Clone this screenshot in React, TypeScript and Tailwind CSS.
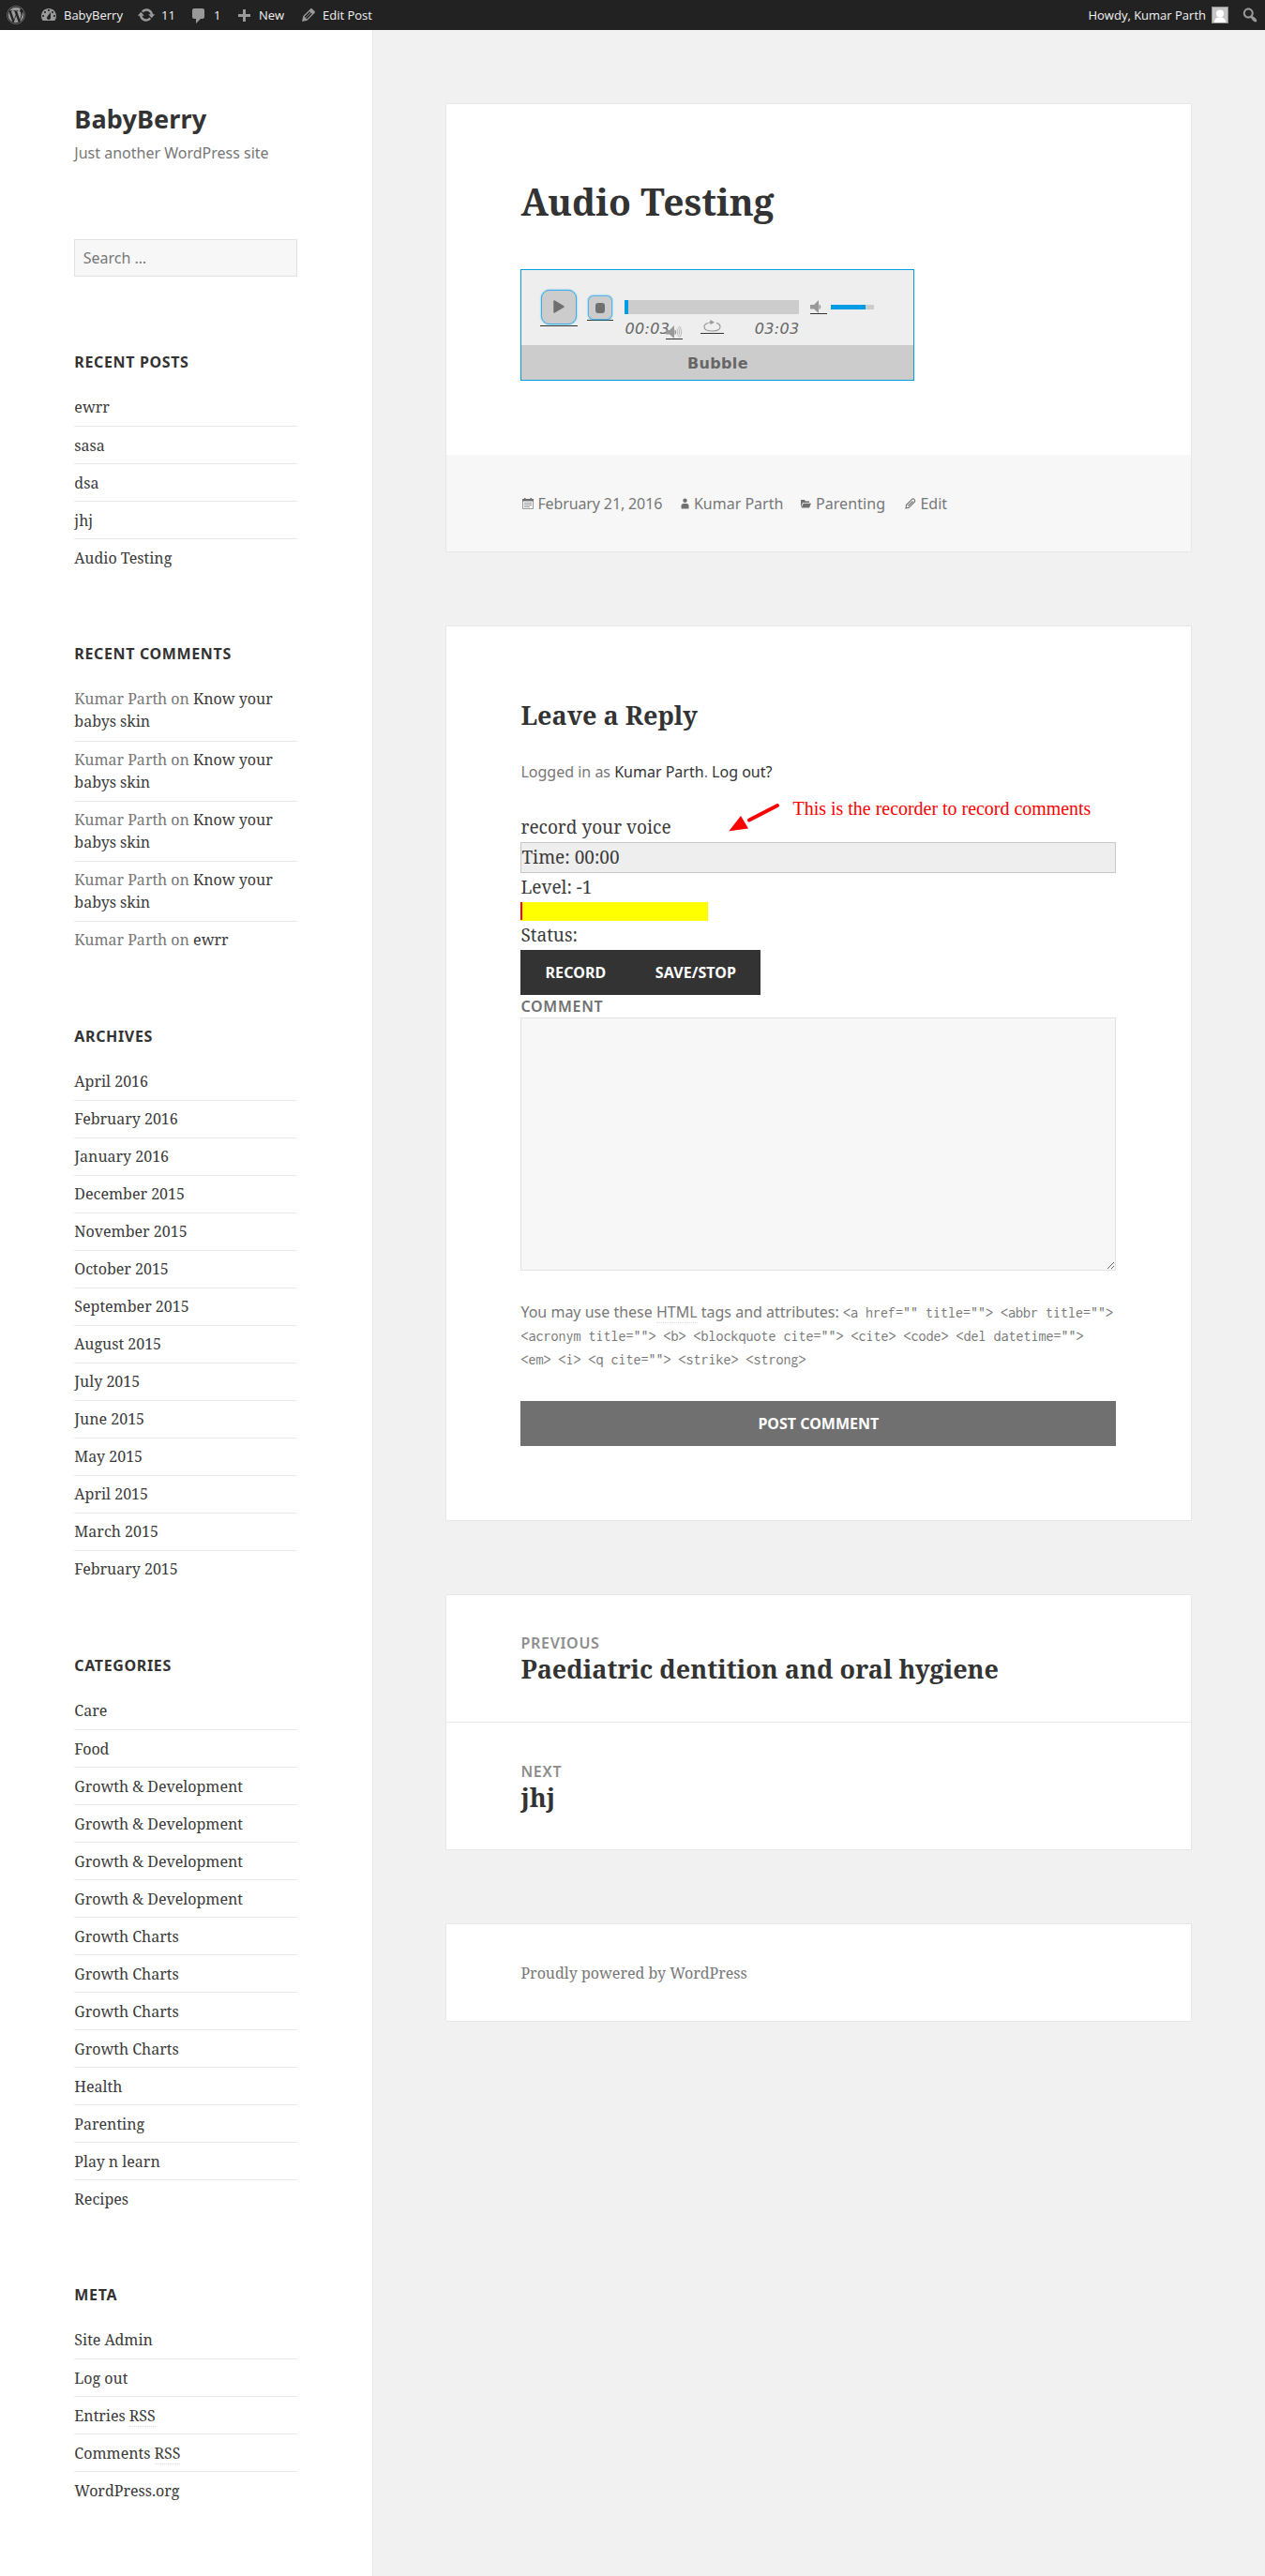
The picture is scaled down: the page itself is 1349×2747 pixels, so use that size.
import type { ReactNode } from "react";
import { FaWordpress } from "react-icons/fa";

const SANS = "font-['Noto_Sans',sans-serif]";
const SERIF = "font-['Noto_Serif','DejaVu_Serif_Condensed','DejaVu_Serif',serif]";
const CARD = "bg-white shadow-[0_0_1px_rgba(0,0,0,0.25)]";

const ICONS = {
  dashboard:
    "M3.76 16h12.48c1.1-1.37 1.76-3.11 1.76-5 0-4.42-3.58-8-8-8s-8 3.58-8 8c0 1.89.66 3.63 1.76 5zM10 4c.55 0 1 .45 1 1s-.45 1-1 1-1-.45-1-1 .45-1 1-1zM6 6c.55 0 1 .45 1 1s-.45 1-1 1-1-.45-1-1 .45-1 1-1zm8 0c.55 0 1 .45 1 1s-.45 1-1 1-1-.45-1-1 .45-1 1-1zm-5.37 5.55L12 7v6c0 1.1-.9 2-2 2s-2-.9-2-2c0-.57.24-1.08.63-1.45zM4 10c.55 0 1 .45 1 1s-.45 1-1 1-1-.45-1-1 .45-1 1-1zm12 0c.55 0 1 .45 1 1s-.45 1-1 1-1-.45-1-1 .45-1 1-1z",
  update:
    "M10.2 3.28c3.53 0 6.43 2.61 6.92 6h2.08l-3.5 4-3.5-4h2.32c-.45-1.97-2.21-3.45-4.32-3.45-1.45 0-2.73.71-3.54 1.78L4.95 5.66C6.23 4.2 8.11 3.28 10.2 3.28zm-.4 13.44c-3.52 0-6.43-2.61-6.92-6H.8l3.5-4c1.17 1.33 2.33 2.67 3.5 4H5.48c.45 1.97 2.21 3.45 4.32 3.45 1.45 0 2.73-.71 3.54-1.78l1.71 1.95c-1.28 1.46-3.15 2.38-5.25 2.38z",
  comment:
    "M5 2h9c1.1 0 2 .9 2 2v7c0 1.1-.9 2-2 2h-2l-5 5v-5H5c-1.1 0-2-.9-2-2V4c0-1.1.9-2 2-2z",
  plus: "M17 7v3h-5v5H9v-5H4V7h5V2h3v5h5z",
  edit: "M13.89 3.39l2.71 2.72c.46.46.42 1.24.03 1.64l-8.01 8.02-5.56 1.16 1.16-5.58s7.6-7.63 7.99-8.03c.39-.39 1.22-.39 1.68.07zm-2.73 2.79l-5.59 5.61 1.11 1.11 5.54-5.65zm-2.97 8.23l5.58-5.6-1.07-1.08-5.59 5.6z",
  search:
    "M12.14 4.18c1.87 1.87 2.11 4.75.72 6.89.12.1.22.21.36.31.2.16.47.36.81.59.34.24.56.39.66.47.42.31.73.57.94.78.32.32.6.65.84 1 .25.35.44.69.59 1.04.14.35.21.68.18 1-.02.32-.14.59-.36.81s-.49.34-.81.36c-.31.02-.65-.04-.99-.19-.35-.14-.7-.34-1.04-.59-.35-.24-.68-.52-1-.84-.21-.21-.47-.52-.77-.93-.1-.13-.25-.35-.47-.66-.22-.32-.4-.57-.56-.78-.16-.2-.29-.35-.44-.5-2.07 1.09-4.69.76-6.44-.98-2.14-2.15-2.14-5.64 0-7.78 2.15-2.15 5.63-2.15 7.78 0zm-1.41 6.36c1.36-1.37 1.36-3.58 0-4.95-1.37-1.37-3.59-1.37-4.95 0-1.37 1.37-1.37 3.58 0 4.95 1.36 1.37 3.58 1.37 4.95 0z",
};

function BarIcon({ name, className = "" }: { name: keyof typeof ICONS; className?: string }) {
  return (
    <svg viewBox="0 0 20 20" className={`h-5 w-5 shrink-0 fill-[#999] ${className}`}>
      <path d={ICONS[name]} />
    </svg>
  );
}

function AdminBar() {
  return (
    <header className="flex h-8 items-center justify-between bg-[#222] font-['Open_Sans',sans-serif] text-[13px] leading-8 text-[#f2f2f2]">
      <nav className="flex items-center">
        <FaWordpress className="ml-[7px] h-5 w-5 text-[#999]" />
        <BarIcon name="dashboard" className="ml-[15px]" />
        <span className="ml-[6px] w-[78px]">BabyBerry</span>
        <BarIcon name="update" />
        <span className="ml-[6px] w-[30px]">11</span>
        <BarIcon name="comment" className="mt-[2px]" />
        <span className="ml-[6px] w-[22px]">1</span>
        <BarIcon name="plus" className="mt-[3px]" />
        <span className="ml-[6px] w-[43px]">New</span>
        <BarIcon name="edit" />
        <span className="ml-[5px]">Edit Post</span>
      </nav>
      <div className="flex items-center">
        <span>Howdy, Kumar Parth</span>
        <svg viewBox="0 0 18 18" className="ml-[6px] h-[18px] w-[18px]">
          <rect x="0.5" y="0.5" width="17" height="17" fill="#c6c6c6" stroke="#8c8f94" />
          <circle cx="9" cy="7.5" r="4" fill="#fff" />
          <path d="M3 17c0-4 2-5 4-5.500h4c2 .5 4 1.500 4 5.500z" fill="#fff" />
        </svg>
        <BarIcon name="search" className="mr-[6px] ml-[13px]" />
      </div>
    </header>
  );
}

function Widget({ title, items }: { title: string; items: ReactNode[] }) {
  return (
    <section className="mb-[78.5px]">
      <h2 className={`${SANS} mb-6 text-base leading-6 font-bold tracking-[0.04em] uppercase`}>{title}</h2>
      <ul className={`${SERIF} text-base leading-6 text-[#3a3a3a]`}>
        {items.map((item, i) => (
          <li
            key={i}
            className="border-b border-[#eaeaea] py-[7.5px] first:pt-0 first:pb-[8.3px] last:border-b-0 last:pb-0"
          >
            {item}
          </li>
        ))}
      </ul>
    </section>
  );
}

function CommentOn({ lines }: { lines: string[] }) {
  return (
    <>
      <span className="text-[#777]">Kumar Parth on </span>
      {lines.map((line, i) => (
        <span key={line}>
          {i > 0 && <br />}
          {line}
        </span>
      ))}
    </>
  );
}

const SKIN_POST = ["Know your", "babys skin"];
const RSS = <abbr className="border-b border-dotted border-[#ddd]">RSS</abbr>;

const WIDGETS: { title: string; items: ReactNode[] }[] = [
  { title: "Recent Posts", items: ["ewrr", "sasa", "dsa", "jhj", "Audio Testing"] },
  {
    title: "Recent Comments",
    items: [
      <CommentOn lines={SKIN_POST} />,
      <CommentOn lines={SKIN_POST} />,
      <CommentOn lines={SKIN_POST} />,
      <CommentOn lines={SKIN_POST} />,
      <CommentOn lines={["ewrr"]} />,
    ],
  },
  {
    title: "Archives",
    items: [
      "April 2016",
      "February 2016",
      "January 2016",
      "December 2015",
      "November 2015",
      "October 2015",
      "September 2015",
      "August 2015",
      "July 2015",
      "June 2015",
      "May 2015",
      "April 2015",
      "March 2015",
      "February 2015",
    ],
  },
  {
    title: "Categories",
    items: [
      "Care",
      "Food",
      "Growth & Development",
      "Growth & Development",
      "Growth & Development",
      "Growth & Development",
      "Growth Charts",
      "Growth Charts",
      "Growth Charts",
      "Growth Charts",
      "Health",
      "Parenting",
      "Play n learn",
      "Recipes",
    ],
  },
  { title: "Meta", items: ["Site Admin", "Log out", <>Entries {RSS}</>, <>Comments {RSS}</>, "WordPress.org"] },
];

function Sidebar() {
  return (
    <aside className="w-[396.75px] shrink-0 bg-white px-[79.35px] pt-[79.35px] shadow-[0_0_1px_rgba(0,0,0,0.25)]">
      <h1 className={`${SANS} text-[27px] leading-8 font-bold tracking-[0.005em]`}>BabyBerry</h1>
      <p className={`${SANS} mt-[8px] mb-[79.7px] text-base leading-6 text-[#777]`}>Just another WordPress site</p>
      <input
        placeholder="Search …"
        className={`${SANS} mb-[79.35px] block h-[39.6px] w-full border border-[#333]/10 bg-[#f7f7f7] px-[8.4px] text-base placeholder:text-[#777]`}
      />
      {WIDGETS.map((w) => (
        <Widget key={w.title} title={w.title} items={w.items} />
      ))}
    </aside>
  );
}

function SpeakerCone() {
  return <path d="M0 5h4l5-5v14L4 9.500H0z M9.500 4.500a3 3 0 0 1 0 5.500z" fill="#999" />;
}

function AudioPlayer() {
  return (
    <div className="mt-[48.300px] h-[119px] w-[420px] border border-[#009de5] bg-[#eee] font-['DejaVu_Sans',sans-serif] text-[#666]">
      <div className="relative flex h-[80px] items-start pl-5">
        <div className="mt-[21px] h-[39px] w-10 border-b border-[#333]">
          <div className="mx-px flex h-[37px] items-center justify-center rounded-[9px] border border-[#3daee9] bg-[#ccc] shadow-[0_0_2px_#3daee9]">
            <svg viewBox="0 0 12 14" className="h-[14px] w-3">
              <path d="M1 1v12l10-6z" fill="#707070" stroke="#707070" strokeWidth="1.500" strokeLinejoin="round" />
            </svg>
          </div>
        </div>
        <div className="mt-[27px] ml-[10px] h-[27px] w-7 border-b border-[#333]">
          <div className="mx-px flex h-[26px] items-center justify-center rounded-[6px] border border-[#3daee9]/80 bg-[#ccc] shadow-[0_0_2px_#3daee9]">
            <div className="mt-px h-[11px] w-[10px] rounded-[3px] bg-[#707070]" />
          </div>
        </div>
        <div className="mt-8 ml-3 w-[186px]">
          <div className="h-[15px] bg-[#ccc]">
            <div className="h-full w-1 bg-[#009de5]" />
          </div>
          <div className="flex items-start justify-between pt-[6px] text-base leading-5 tracking-[0.02em] italic">
            <span>00:03</span>
            <div className="w-[25px] border-b border-[#333] pb-px">
              <svg viewBox="0 0 25 13" className="h-[13px] w-[25px]">
                <path
                  d="M8.500 3.500C5.500 4 4 5.500 4 7.500 4 10.500 8 12 12.500 12s8.500-1.500 8.500-4.500c0-2-1.500-3.500-4-4.200M9 2.800h3"
                  fill="none"
                  stroke="#999"
                  strokeWidth="1.200"
                />
                <path d="M10.500 0l4.500 2.700-4.500 2.500z" fill="#999" />
              </svg>
            </div>
            <span>03:03</span>
          </div>
        </div>
        <div className="mt-8 ml-3 h-[15px] w-[18px] border-b border-[#333]">
          <svg viewBox="0 0 18 14" className="h-[14px] w-[18px]">
            <SpeakerCone />
          </svg>
        </div>
        <div className="mt-[37px] ml-1 h-[5px] w-[46px] bg-[#ccc]">
          <div className="h-full w-[37px] bg-[#009de5]" />
        </div>
        <div className="absolute top-[59px] left-[154px] h-[15px] w-[18px] border-b border-[#333]">
          <svg viewBox="0 0 18 14" className="h-[14px] w-[18px]">
            <SpeakerCone />
            <path d="M12 4q2 3 0 6M13 2q3.500 5 0 10M14.500 0.800q4.500 6.200 0 12.400" fill="none" stroke="#bbb" strokeWidth="1" />
          </svg>
        </div>
      </div>
      <div className="h-[37px] bg-[#ccc] text-center text-base leading-[40px] font-bold tracking-[0.02em]">Bubble</div>
    </div>
  );
}

function EntryFooter() {
  return (
    <footer
      className={`${SANS} flex h-[103px] items-center bg-[#f7f7f7] px-[79.35px] text-base leading-6 text-[#777]`}
    >
      <svg viewBox="0 0 12 12" className="mr-[4px] ml-[2px] h-3 w-3">
        <path d="M0.500 2.500h11v9h-11z" fill="none" stroke="#999" />
        <path d="M0 1h12v2.500H0zM2 0h1.500v2H2zM8.500 0H10v2H8.500z" fill="#707070" />
        <path d="M2 5.500h8M2 7.500h8M2 9.500h6" stroke="#999" />
      </svg>
      <span className="w-[152.500px] tracking-[-0.008em]">February 21, 2016</span>
      <svg viewBox="0 0 9 12" className="mr-[5px] h-3 w-[9px] fill-[#707070]">
        <circle cx="4.500" cy="2.700" r="2.200" />
        <path d="M0.500 11.500V8.500Q0.500 6 3 6h3q2.500 0 2.500 2.500v3z" />
      </svg>
      <span className="w-[114px]">Kumar Parth</span>
      <svg viewBox="0 0 11 12" className="mr-[5px] h-3 w-[11px] fill-[#707070]">
        <path d="M0 2h4l1 1.500h4V5H2L0 10zM2.700 5.800H11L9 10.500H.5z" />
      </svg>
      <span className="w-[95.500px] tracking-[0.005em]">Parenting</span>
      <svg viewBox="0 0 12 12" className="mr-1 h-3 w-3">
        <path
          d="M1 11l.5-3.500L7.800 1.200Q9 .4 10 1.500T10.500 4L4.300 10.300zM3.500 8.500l5-5"
          fill="none"
          stroke="#707070"
          strokeWidth="1.100"
        />
      </svg>
      <span>Edit</span>
    </footer>
  );
}

function CommentForm() {
  return (
    <section className={`${CARD} relative mt-[79.35px] h-[953.500px] px-[79.35px] pt-[79.35px]`}>
      <h2 className={`${SERIF} text-[27px] leading-8 font-bold`}>Leave a Reply</h2>
      <p className={`${SANS} mt-[32px] text-base leading-6 text-[#777]`}>
        Logged in as <span className="text-[#333]">Kumar Parth</span>. <span className="text-[#333]">Log out?</span>
      </p>
      <div className={`${SERIF} mt-[31px] text-[19px] leading-8 text-[#3a3a3a]`}>
        <p>record your voice</p>
        <p className="h-[33px] border border-[#c8c8c8] bg-[#eee] leading-[31px]">Time: 00:00</p>
        <p className="h-[31px] leading-[30px]">Level: -1</p>
        <div className="h-5 w-[200px] bg-[#ff0]">
          <div className="h-[19px] w-[2px] bg-[#f00]" />
        </div>
        <p className="h-[31px] leading-[30px]">Status:</p>
      </div>
      <div
        className={`${SANS} flex h-12 w-64 bg-[#333] text-base leading-[48px] font-bold tracking-[0.006em] text-white`}
      >
        <button className="w-[117px]">RECORD</button>
        <button className="w-[139px]">SAVE/STOP</button>
      </div>
      <label className={`${SANS} block text-base leading-6 font-semibold tracking-[0.045em] text-[#707070]`}>COMMENT</label>
      <textarea className="block h-[270px] w-full border border-[#333]/10 bg-[#f7f7f7]" />
      <div className={`${SANS} mt-[32px] h-[75px] text-base leading-[25px] whitespace-nowrap text-[#777]`}>
        You may use these <abbr className="border-b border-dotted border-[#ddd]">HTML</abbr> tags and attributes:{" "}
        <code className="font-['Inconsolata','Liberation_Mono',monospace] text-base leading-none">
          {'<a href="" title=""> <abbr title="">'}
        </code>
        <code className="block font-['Inconsolata','Liberation_Mono',monospace] text-base leading-[25px]">
          {'<acronym title=""> <b> <blockquote cite=""> <cite> <code> <del datetime="">'}
          <br />
          {'<em> <i> <q cite=""> <strike> <strong>'}
        </code>
      </div>
      <button className={`${SANS} mt-[32px] block h-12 w-full bg-[#707070] text-base font-bold text-white`}>
        POST COMMENT
      </button>
      <svg className="absolute top-[184px] left-[298px] h-[40px] w-[60px]" viewBox="0 0 60 40">
        <path d="M55 7L25 22.500" stroke="#f00" strokeWidth="4" strokeLinecap="round" />
        <path d="M3.300 34.300L16 18l8 13.500z" fill="#f00" />
      </svg>
      <p className="absolute top-[182px] left-[369.500px] font-['Liberation_Serif',serif] text-[19.950px] leading-6 whitespace-nowrap text-[#f00]">
        This is the recorder to record comments
      </p>
    </section>
  );
}

function PostLink({ label, title }: { label: string; title: string }) {
  return (
    <a className="block px-[79.35px] pt-[39.400px] pb-[40px]">
      <span className={`${SANS} block text-base leading-6 font-semibold tracking-[0.045em] text-[#8d8d8d] uppercase`}>
        {label}
      </span>
      <span className={`${SERIF} block text-[27px] leading-8 font-bold`}>{title}</span>
    </a>
  );
}

export default function App() {
  return (
    <div className="flex h-[2747px] flex-col overflow-hidden bg-[#f1f1f1] text-[#333]">
      <AdminBar />
      <div className="flex grow">
        <Sidebar />
        <main className="ml-[79.35px] w-[793.500px] pt-[79.35px]">
          <article className={`${CARD} h-[477px]`}>
            <div className="h-[374px] px-[79.35px] pt-[79.35px]">
              <h1 className={`${SERIF} text-[39px] leading-[48px] font-bold`}>Audio Testing</h1>
              <AudioPlayer />
            </div>
            <EntryFooter />
          </article>
          <CommentForm />
          <nav className={`${CARD} mt-[79.700px] h-[271.500px]`}>
            <PostLink label="Previous" title="Paediatric dentition and oral hygiene" />
            <div className="h-px bg-[#eaeaea]" />
            <PostLink label="Next" title="jhj" />
          </nav>
          <footer
            className={`${CARD} ${SERIF} mt-[79.35px] h-[103.500px] px-[79.35px] text-base leading-[105px] text-[#777]`}
          >
            Proudly powered by WordPress
          </footer>
        </main>
      </div>
    </div>
  );
}
